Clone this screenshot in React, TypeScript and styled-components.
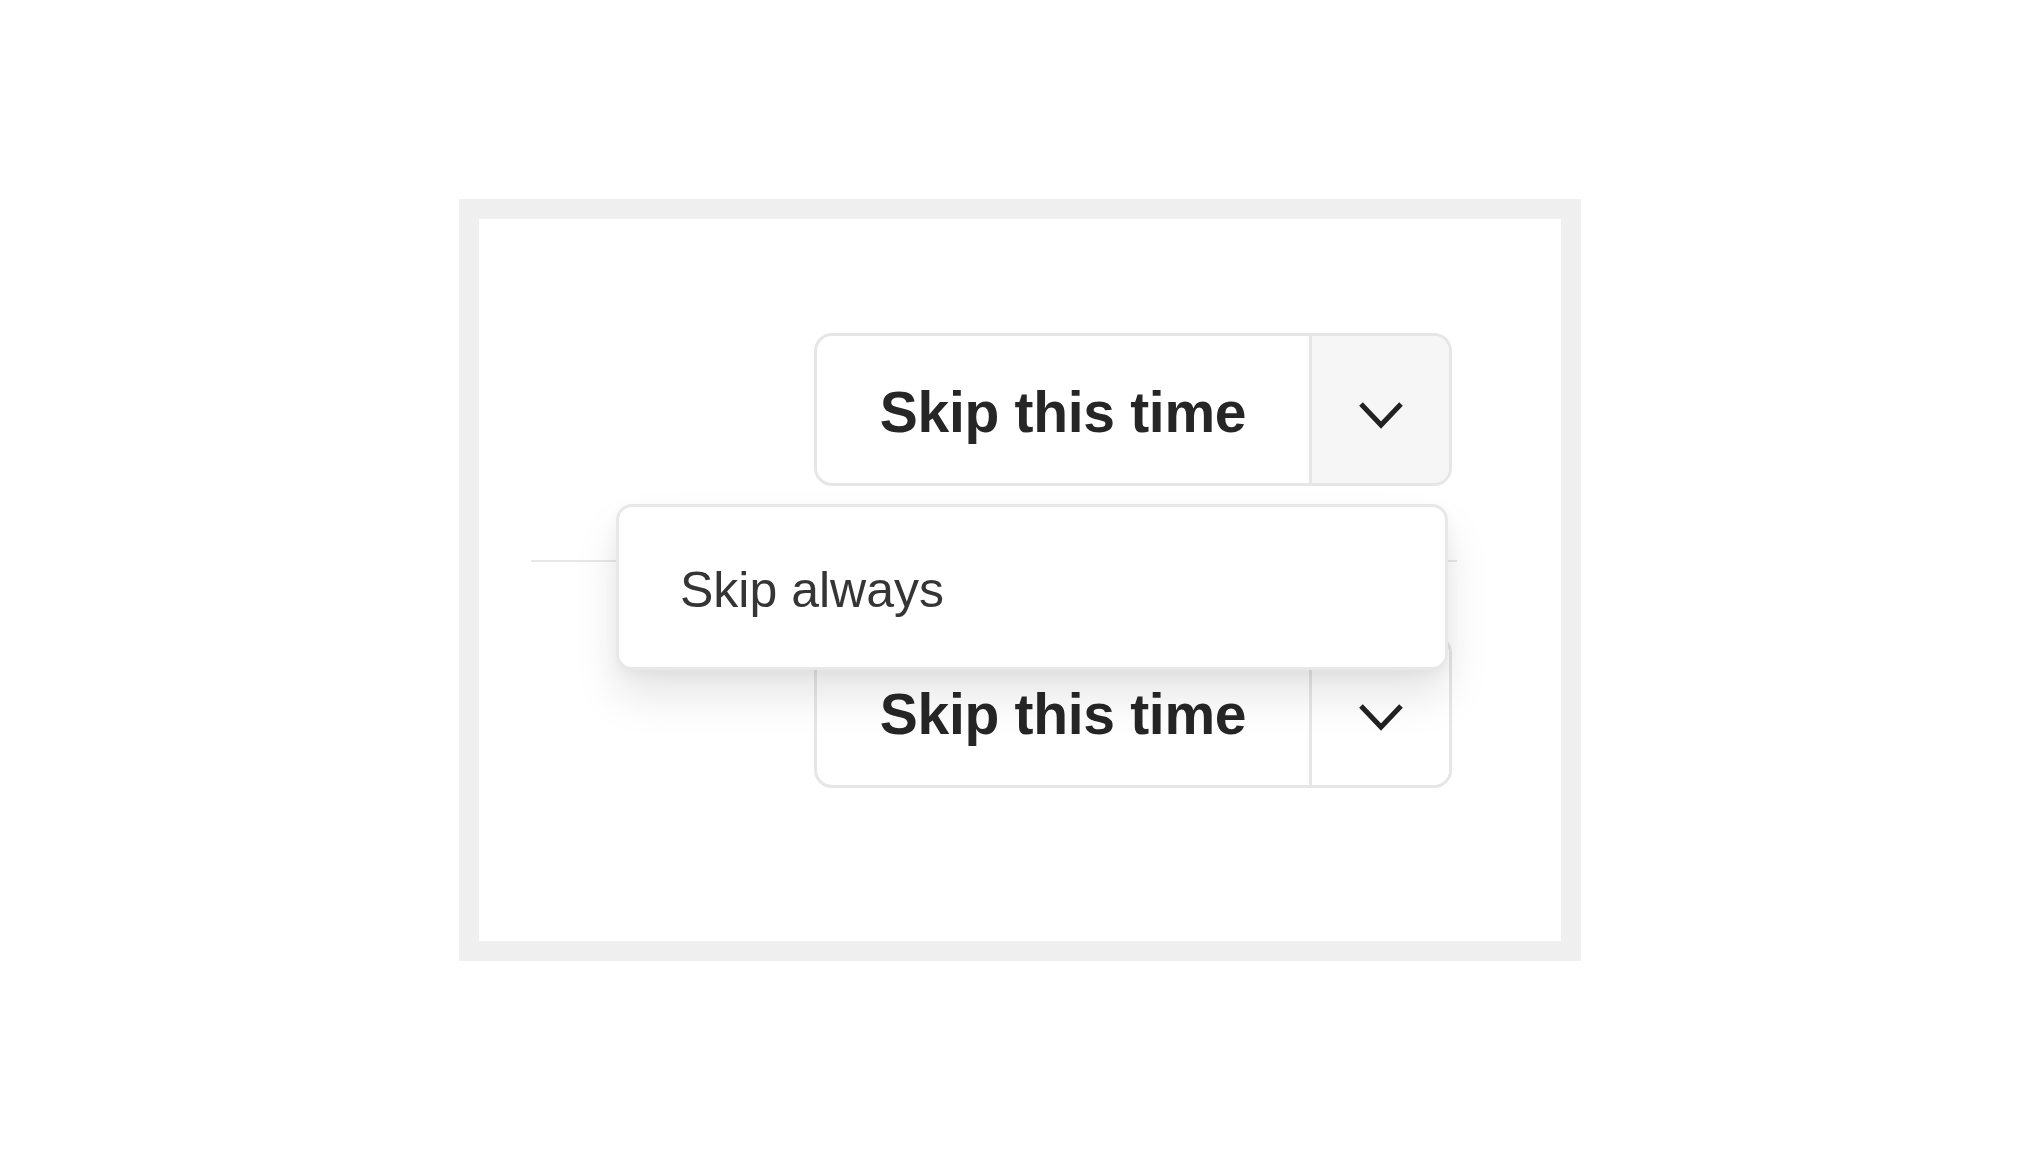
import React from "react";
import styled, { createGlobalStyle } from "styled-components";

const Global = createGlobalStyle`
  html, body { margin: 0; padding: 0; background: #ffffff; }
  body { font-family: "Liberation Sans", Arial, sans-serif; }
  * { box-sizing: border-box; }
`;

const Page = styled.div`
  width: 2040px;
  height: 1160px;
  display: flex;
  align-items: center;
  justify-content: center;
`;

const Frame = styled.div`
  width: 1122px;
  height: 762px;
  border: 20px solid #efefef;
  background: #ffffff;
  padding: 114px 0 0 52px;
`;

const Stack = styled.div`
  width: 926px;
  display: flex;
  flex-direction: column;
`;

const Row = styled.div<{ $top?: boolean }>`
  display: flex;
  justify-content: flex-end;
  padding-right: 5px;
  ${(p) => (p.$top ? "padding-bottom: 74px;" : "padding-top: 73px;")}
`;

const Divider = styled.div`
  height: 2px;
  background: #e8e8e8;
`;

const Anchor = styled.div`
  position: relative;
`;

const SplitButton = styled.div`
  width: 638px;
  height: 153px;
  display: flex;
  border: 3px solid #e6e6e6;
  border-radius: 18px;
  overflow: hidden;
  background: #ffffff;
`;

const MainPart = styled.div`
  flex: 1;
  display: flex;
  align-items: center;
  justify-content: center;
  font-family: "Liberation Sans", Arial, sans-serif;
  font-weight: 700;
  font-size: 57px;
  letter-spacing: -0.3px;
  color: #262626;
  padding-top: 4px;
`;

const ToggleDivider = styled.div`
  width: 3px;
  background: #e6e6e6;
`;

const TogglePart = styled.div<{ $active?: boolean }>`
  width: 137px;
  display: flex;
  align-items: center;
  justify-content: center;
  background: ${(p) => (p.$active ? "#f6f6f6" : "#ffffff")};
  padding-top: 10px;
`;

const Menu = styled.div`
  position: absolute;
  top: calc(100% + 18px);
  right: 4px;
  width: 832px;
  height: 166px;
  background: #ffffff;
  border: 3px solid #e8e8e8;
  border-radius: 16px;
  box-shadow: 0 26px 44px rgba(0, 0, 0, 0.1), 0 6px 14px rgba(0, 0, 0, 0.04);
  display: flex;
  align-items: center;
  padding-left: 61px;
  z-index: 2;
`;

const MenuItem = styled.div`
  font-family: "Liberation Sans", Arial, sans-serif;
  font-weight: 400;
  font-size: 50px;
  color: #353535;
  padding-top: 6px;
`;

const Chevron = () => (
  <svg width="46" height="30" viewBox="0 0 46 30" fill="none">
    <polyline
      points="3,4 23,25 43,4"
      stroke="#222222"
      strokeWidth="5"
      strokeLinejoin="miter"
      strokeLinecap="butt"
    />
  </svg>
);

const Button = ({ active }: { active?: boolean }) => (
  <SplitButton>
    <MainPart>Skip this time</MainPart>
    <ToggleDivider />
    <TogglePart $active={active}>
      <Chevron />
    </TogglePart>
  </SplitButton>
);

export default function App() {
  return (
    <>
      <Global />
      <Page>
        <Frame>
          <Stack>
            <Row $top>
              <Anchor>
                <Button active />
                <Menu>
                  <MenuItem>Skip always</MenuItem>
                </Menu>
              </Anchor>
            </Row>
            <Divider />
            <Row>
              <Button />
            </Row>
          </Stack>
        </Frame>
      </Page>
    </>
  );
}
